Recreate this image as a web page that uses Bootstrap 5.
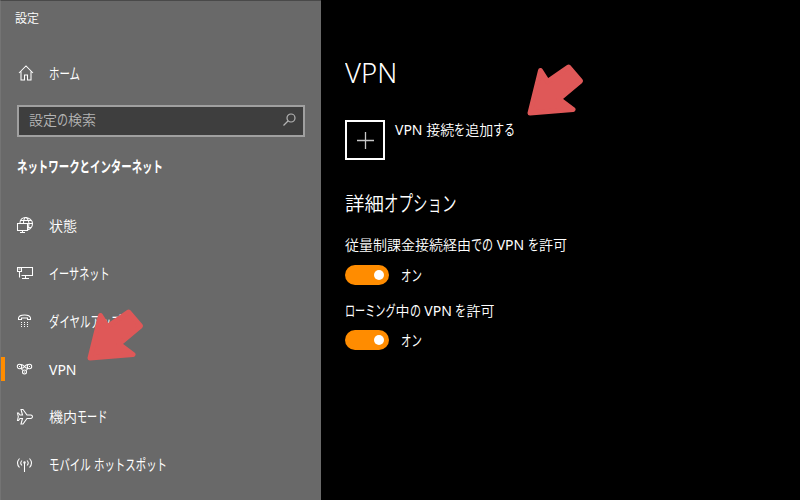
<!DOCTYPE html>
<html lang="ja">
<head>
<meta charset="utf-8">
<meta name="viewport" content="width=device-width, initial-scale=1">
<title>設定</title>
<link href="https://cdn.jsdelivr.net/npm/bootstrap@5.3.0/dist/css/bootstrap.min.css" rel="stylesheet">
<style>
body{width:800px;height:500px;background:#000;color:#fff;font:14px/20px "Noto Sans","Noto Sans CJK JP",sans-serif}
.side{width:321px;height:500px;background:#696969;border-top:1px solid #494949;border-left:1px solid #747474;white-space:nowrap}
.cj{font-family:"Noto Sans CJK JP",sans-serif;font-weight:350;line-height:1}
/* condensed kana: --n glyphs, each --k em wide */
.kn{display:inline-block;font-family:"Noto Sans CJK JP",sans-serif;font-size:1.08em;line-height:1;transform:scaleX(var(--k,.69));transform-origin:0 50%;margin-right:calc(var(--n)*(var(--k,.69)*1em - 1em));white-space:nowrap}
.k70{--k:.67}.k78{--k:.73}
.app-title{font-size:12px;line-height:18px;padding:8px 0 0 14px;height:49px}
.home-row{height:46px;padding-left:16px}
.ico{width:18px;height:18px;flex:none;margin-right:14px;fill:none;stroke:#fff;stroke-width:1.05;overflow:visible}
.search{width:288px;height:32px;margin:9px 0 0 16px;border:2px solid #a0a0a0;background:#3e3e3e;color:#b4b4b4;padding:0 7px 3px 10px}
.group-title{height:64px;padding:20px 0 0 16px;font-weight:700}
.entry{height:48px;padding-left:15px;position:relative}
.entry>span{margin-left:1px}
.entry>.cj{margin-top:-1px}
.entry.on::before{content:"";position:absolute;left:0;top:12px;width:4px;height:24px;background:#ff8c00}
.entry.on>span{margin-top:2px}
.main-pane{padding-left:24px;white-space:nowrap}
h1{font:350 28px/36px "Noto Sans","Open Sans",sans-serif;margin:54px 0 30px;transform:scaleX(.98);transform-origin:0 50%}
.plus{width:40px;height:40px;border:2px solid #fff;margin-right:10px}
.line{height:20px;line-height:20px}
h2{font-size:19.500px;line-height:26px;height:26px;font-weight:350;margin:31px 0 18px}
.toggle-row{height:20px}
.t1{margin:10px 0 16px}.t2{margin-top:9px}
.sw{width:44px;height:20px;border-radius:10px;background:#ff8c00;padding-right:5px;margin-right:12px}
.knob{width:10px;height:10px;border-radius:50%;background:#fff}
.arrow{position:absolute;width:60px;height:56px;fill:#df5858;stroke:#df5858;stroke-width:5;stroke-linejoin:round}
</style>
<script src="https://cdn.jsdelivr.net/npm/bootstrap@5.3.0/dist/js/bootstrap.bundle.min.js"></script>
</head>
<body class="d-flex overflow-hidden position-relative">
<aside class="side flex-shrink-0">
  <div class="app-title cj">設定</div>
  <div class="home-row d-flex align-items-center">
    <svg class="ico" viewBox="0 0 18 18"><path d="M2 9 9 2l7 7M4 7.500v8.500h3.500v-5h3v5H14V7.500"/></svg>
    <span class="kn" style="--n:3">ホーム</span>
  </div>
  <div class="search d-flex align-items-center justify-content-between">
    <span><span class="cj">設定</span><span class="kn k78" style="--n:1">の</span><span class="cj">検索</span></span>
    <svg width="13" height="13" viewBox="0 0 13 13" fill="none" stroke="#b4b4b4" stroke-width="1.2"><circle cx="8" cy="5" r="4"/><path d="M5 8 .5 12.5"/></svg>
  </div>
  <div class="group-title"><span class="kn" style="--n:14">ネットワークとインターネット</span></div>
  <nav>
    <div class="entry d-flex align-items-center">
      <svg class="ico" viewBox="0 0 18 18"><path d="M4 7C4 3.500 6.500 1.500 9.500 1.500S16.500 4 16.500 7.500 14.500 13 11.500 14M7.500 7C7.500 4 8.500 1.500 9.700 1.500S13 5 13 7.500 12.500 11.800 11.500 13.500M4.700 4.500H15.700M10 7.500h6.500M11.500 11.500h3.500M1.500 7.500h10v7h-10zM6.500 14.500v2M4 16.500h5"/></svg>
      <span class="cj">状態</span>
    </div>
    <div class="entry d-flex align-items-center">
      <svg class="ico" viewBox="0 0 18 18"><path d="M6 3.500h10.500v8H5.500M1.500 3.500H5.500v4h-4zM2.500 5h2M3.500 7.500v6M9.500 11.500v3M6 14.500h7"/></svg>
      <span class="kn k70" style="--n:6">イーサネット</span>
    </div>
    <div class="entry d-flex align-items-center">
      <svg class="ico" viewBox="0 0 18 18"><path d="M2.500 7.500V6Q3 3 8.500 3T14.500 6v1.500h-3V6h-6v1.500z"/><path stroke-dasharray="1 2" d="M5 10.500h7M5 12.500h7M5 14.500h7"/></svg>
      <span class="kn" style="--n:7">ダイヤルアップ</span>
    </div>
    <div class="entry on d-flex align-items-center">
      <svg class="ico" viewBox="0 0 18 18"><circle cx="3.500" cy="6.500" r="2.200"/><circle cx="13.500" cy="6.500" r="2.200"/><circle cx="8.500" cy="12" r="2"/><path d="M4.500 4.500Q7 4.500 8.500 6.500T12 8.500M12.500 4.500Q10 4.500 8.500 6.500T5 8.500M5 8.500 7 10.500M12 8.500 10 10.500M3 6.500h1M13 6.500h1M8 12h1"/></svg>
      <span>VPN</span>
    </div>
    <div class="entry d-flex align-items-center">
      <svg class="ico" viewBox="0 0 18 18"><path d="M6.500 7 5 1.500h2L11 7h4q1.500.5 1.500 1.700T15 10.500h-4L7 16H5l1.500-5.500H4L2.500 12.500H1.500L2.300 8.700 1.500 5H2.500L4 7z"/></svg>
      <span><span class="cj">機内</span><span class="kn k70" style="--n:3">モード</span></span>
    </div>
    <div class="entry d-flex align-items-center">
      <svg class="ico" viewBox="0 0 18 18"><path d="M8.500 6.500V16M6 4.500Q3.500 7 6 9.500M11 4.500q2.500 2.500 0 5M3.500 2.500Q-.5 7 3.500 11.500M13.500 2.500q4 4.500 0 9"/><circle cx="8.500" cy="6.500" r=".7"/></svg>
      <span><span class="kn" style="--n:4">モバイル</span> <span class="kn" style="--n:7">ホットスポット</span></span>
    </div>
  </nav>
</aside>
<main class="main-pane flex-grow-1">
  <h1>VPN</h1>
  <div class="d-flex">
    <div class="plus d-flex align-items-center justify-content-center"><svg width="17" height="17" viewBox="0 0 17 17" stroke="#c8c8c8" stroke-width="1.3"><path d="M0 8.500H17M8.500 0V17"/></svg></div>
    <div class="line">VPN <span class="cj">接続</span><span class="kn k78" style="--n:1">を</span><span class="cj">追加</span><span class="kn k78" style="--n:2">する</span></div>
  </div>
  <h2><span class="cj">詳細</span><span class="kn" style="--n:5">オプション</span></h2>
  <div class="line"><span class="cj">従量制課金接続経由</span><span class="kn k78" style="--n:2">での</span> VPN <span class="kn k78" style="--n:1">を</span><span class="cj">許可</span></div>
  <div class="toggle-row t1 d-flex align-items-center"><div class="sw d-flex align-items-center justify-content-end"><div class="knob"></div></div><span class="kn" style="--n:2">オン</span></div>
  <div class="line"><span class="kn k70" style="--n:5">ローミング</span><span class="cj">中</span><span class="kn k78" style="--n:1">の</span> VPN <span class="kn k78" style="--n:1">を</span><span class="cj">許可</span></div>
  <div class="toggle-row t2 d-flex align-items-center"><div class="sw d-flex align-items-center justify-content-end"><div class="knob"></div></div><span class="kn" style="--n:2">オン</span></div>
</main>
<svg class="arrow" style="left:85px;top:307px" viewBox="0 0 60 56"><path d="M5 51 15.500 8.500 22.500 19.500 43.500 5 55.500 19 34 37 48 47.500z"/></svg>
<svg class="arrow" style="left:525px;top:62px" viewBox="0 0 60 56"><path d="M5 51 15.500 8.500 22.500 19.500 43.500 5 55.500 19 34 37 48 47.500z"/></svg>
</body>
</html>
